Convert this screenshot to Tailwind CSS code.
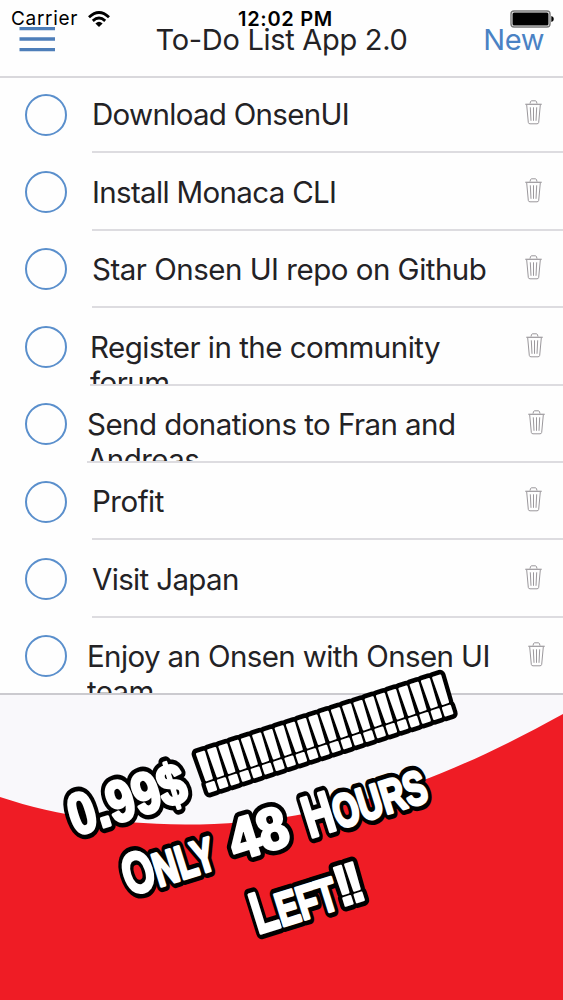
<!DOCTYPE html>
<html lang="en">
<head>
<meta charset="utf-8">
<title>To-Do List App 2.0</title>
<script src="https://cdn.jsdelivr.net/npm/@tailwindcss/browser@4"></script>
</head>
<body class="bg-white">
<svg class="hidden">
  <symbol id="trash" viewBox="0 0 17 25">
    <g fill="none" stroke="#9b989c" stroke-width="1">
      <path d="M5 3.6 5.6 1.4Q6 .8 7 .8H10Q11 .8 11.4 1.4L12 3.6"/>
      <path d="M.3 4.3H16.7" stroke-width="1.2"/>
      <path d="M1.7 5 3.3 22.4Q3.5 23.8 5 23.8H12Q13.5 23.8 13.7 22.4L15.3 5"/>
      <path d="M5.3 7.3 6 20.8M8.5 7.3V20.8M11.7 7.3 11 20.8"/>
    </g>
  </symbol>
</svg>
<div class="relative flex h-[1000px] w-[563px] flex-col overflow-hidden bg-[#f9f8fb] font-['Inter',sans-serif] text-[#232225]">
  <header class="relative z-10 h-[78px] shrink-0 border-b-2 border-[#d9d8dc] bg-[#fefefe]">
    <div class="grid h-[54px] grid-cols-[1fr_auto_1fr] items-start pt-[23px]">
      <svg class="ml-[19px] mt-[3px]" width="37" height="27" viewBox="0 0 37 27"><path d="M.5 2.6H36M.5 13H36M.5 23.6H36" stroke="#4d7eb9" stroke-width="3.4"/></svg>
      <h1 class="text-[29px] leading-[34px] tracking-[-0.3px]">To-Do List App 2.0</h1>
      <span class="mr-[19px] text-right text-[29px] leading-[34px] tracking-[-0.4px] text-[#4a82c4]">New</span>
    </div>
    <div class="absolute inset-x-0 top-px grid h-9 grid-cols-3 items-center text-[19px] leading-9 text-black">
      <div class="flex items-center gap-[10px] pl-[11px]">
        <span class="tracking-[0.7px]">Carrier</span>
        <svg width="22" height="17" viewBox="0 0 22 17"><g fill="none" stroke="#000" stroke-width="2.8"><path d="M1 6.2Q11-3.2 21 6.2"/><path d="M4.8 9.9Q11 4.2 17.2 9.9"/></g><path d="M7.4 12.5Q11 9.2 14.6 12.5L11 16Z"/></svg>
      </div>
      <span class="pl-2 text-center text-[20px] font-semibold tracking-[0.7px]">12:02 PM</span>
      <svg class="ml-auto mr-[9px]" width="44" height="18" viewBox="0 0 44 18"><rect x="1" y="1" width="39" height="16" rx="3" fill="none" stroke="#777" stroke-width="1.4"/><rect x="2.5" y="2.5" width="36" height="13" rx="1.5"/><path d="M41.3 6Q43.8 6.5 43.8 9T41.3 12Z"/></svg>
    </div>
  </header>

  <main class="-mt-[2px] h-[618.8px] shrink-0 overflow-hidden border-b-2 border-[#cbcacf] bg-[#fefefe] text-[29.5px] leading-[35px]">
    <div class="flex h-[77.4px] pl-[25px]"><i class="mt-[17.7px] size-[42px] shrink-0 rounded-full border-2 border-[#5a8fcc]"></i><div class="ml-[25px] flex flex-1 overflow-hidden border-b-2 border-[#dddce0] pt-[21.4px]"><p class="w-[433px] tracking-[-0.7px]">Download OnsenUI</p><svg class="mt-[3px]" width="17" height="25"><use href="#trash"/></svg></div></div>
    <div class="flex h-[77.4px] pl-[25px]"><i class="mt-[17.7px] size-[42px] shrink-0 rounded-full border-2 border-[#5a8fcc]"></i><div class="ml-[25px] flex flex-1 overflow-hidden border-b-2 border-[#dddce0] pt-[21.4px]"><p class="w-[433px] tracking-[-0.67px]">Install Monaca CLI</p><svg class="mt-[3px]" width="17" height="25"><use href="#trash"/></svg></div></div>
    <div class="flex h-[77.4px] pl-[25px]"><i class="mt-[17.7px] size-[42px] shrink-0 rounded-full border-2 border-[#5a8fcc]"></i><div class="ml-[25px] flex flex-1 overflow-hidden border-b-2 border-[#dddce0] pt-[21.4px]"><p class="w-[433px] tracking-[-0.5px]">Star Onsen UI repo on Github</p><svg class="mt-[3px]" width="17" height="25"><use href="#trash"/></svg></div></div>
    <div class="flex h-[77.4px] pl-[25px]"><i class="mt-[17.7px] size-[42px] shrink-0 rounded-full border-2 border-[#5a8fcc]"></i><div class="ml-[23px] flex flex-1 overflow-hidden border-b-2 border-[#dddce0] pt-[21.4px]"><p class="w-[436px] tracking-[-0.52px]">Register in the community<br>forum</p><svg class="mt-[3px]" width="17" height="25"><use href="#trash"/></svg></div></div>
    <div class="flex h-[77.4px] pl-[25px]"><i class="mt-[17.7px] size-[42px] shrink-0 rounded-full border-2 border-[#5a8fcc]"></i><div class="ml-[20px] flex flex-1 overflow-hidden border-b-2 border-[#dddce0] pt-[21.4px]"><p class="w-[441px] tracking-[-0.55px]">Send donations to Fran and<br>Andreas</p><svg class="mt-[3px]" width="17" height="25"><use href="#trash"/></svg></div></div>
    <div class="flex h-[77.4px] pl-[25px]"><i class="mt-[17.7px] size-[42px] shrink-0 rounded-full border-2 border-[#5a8fcc]"></i><div class="ml-[25px] flex flex-1 overflow-hidden border-b-2 border-[#dddce0] pt-[21.4px]"><p class="w-[433px] tracking-[-0.5px]">Profit</p><svg class="mt-[3px]" width="17" height="25"><use href="#trash"/></svg></div></div>
    <div class="flex h-[77.4px] pl-[25px]"><i class="mt-[17.7px] size-[42px] shrink-0 rounded-full border-2 border-[#5a8fcc]"></i><div class="ml-[25px] flex flex-1 overflow-hidden border-b-2 border-[#dddce0] pt-[21.4px]"><p class="w-[433px] tracking-[-0.65px]">Visit Japan</p><svg class="mt-[3px]" width="17" height="25"><use href="#trash"/></svg></div></div>
    <div class="flex h-[77.4px] pl-[25px]"><i class="mt-[17.7px] size-[42px] shrink-0 rounded-full border-2 border-[#5a8fcc]"></i><div class="ml-[20px] flex flex-1 overflow-hidden pt-[21.4px]"><p class="w-[441px] tracking-[-0.62px]">Enjoy an Onsen with Onsen UI<br>team</p><svg class="mt-[3px]" width="17" height="25"><use href="#trash"/></svg></div></div>
  </main>

  <svg class="absolute inset-0" width="563" height="1000" viewBox="0 0 563 1000">
    <path d="M0 797C60 817 120 824.5 200 824.5C330 822 440 782 563 714V1000H0Z" fill="#ef1c25"/>
    <defs>
      <g id="promo" stroke-linejoin="round" font-family="Liberation Sans" font-weight="700" font-size="58">
        <text transform="translate(75 836) rotate(-17.3)" textLength="121" lengthAdjust="spacingAndGlyphs">0.99$</text>
        <text transform="translate(129 896) rotate(-17.3)" textLength="94" lengthAdjust="spacingAndGlyphs">O<tspan font-size="47">NLY</tspan></text>
        <text transform="translate(236 861) rotate(-17.3)" textLength="59" lengthAdjust="spacingAndGlyphs">48</text>
        <text transform="translate(310 838) rotate(-17.3)" textLength="126" lengthAdjust="spacingAndGlyphs">H<tspan font-size="47">OURS</tspan></text>
        <text transform="translate(258 934) rotate(-17.3)" textLength="87" lengthAdjust="spacingAndGlyphs">L<tspan font-size="47">EFT</tspan></text>
      </g>
      <g id="marks" stroke-linejoin="round" font-family="Liberation Sans" font-weight="700" font-size="57">
        <text transform="translate(204.5 793) rotate(-17.9) scale(.9 1)" letter-spacing="-5.85">!!!!!!!!!!!!!!!!!!!!!!</text>
        <text transform="translate(341 907) rotate(-17.3) scale(.9 1)" letter-spacing="-5.85">!!</text>
      </g>
    </defs>
    <g stroke="#000"><use href="#promo" stroke-width="12.5"/><use href="#marks" stroke-width="12"/></g>
    <g fill="#fff" stroke="#fff"><use href="#promo" stroke-width="3.2"/><use href="#marks" stroke-width="2.4"/></g>
  </svg>
</div>
</body>
</html>
